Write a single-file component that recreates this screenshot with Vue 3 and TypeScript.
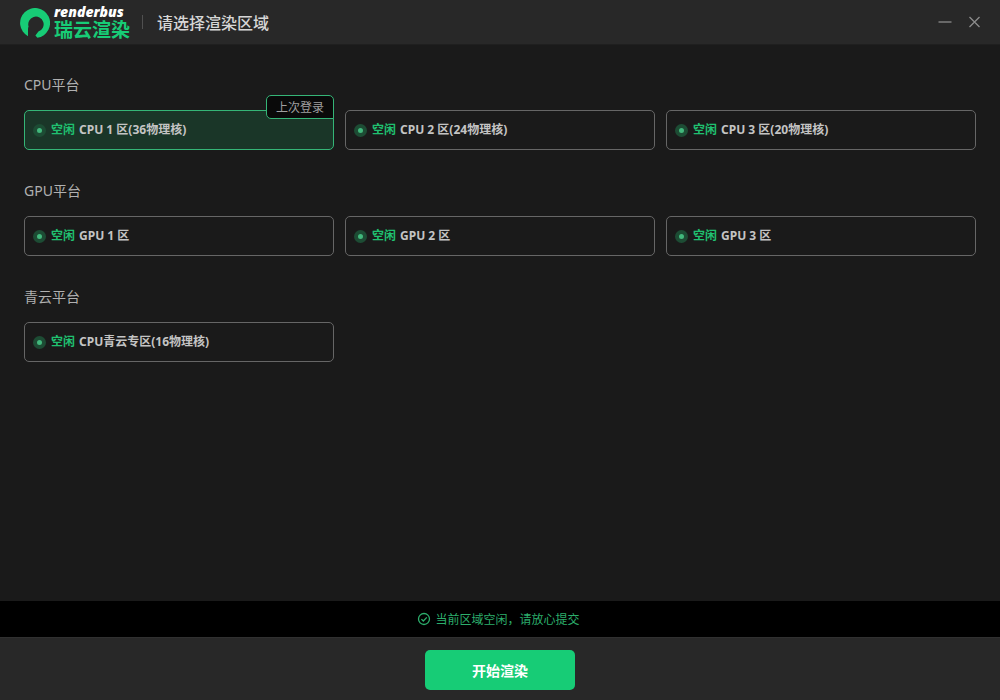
<script setup lang="ts">
import { ref } from 'vue'

interface Region {
  id: string
  name: string
}

interface Platform {
  title: string
  regions: Region[]
}

const platforms: Platform[] = [
  {
    title: 'CPU平台',
    regions: [
      { id: 'cpu1', name: 'CPU 1 区(36物理核)' },
      { id: 'cpu2', name: 'CPU 2 区(24物理核)' },
      { id: 'cpu3', name: 'CPU 3 区(20物理核)' },
    ],
  },
  {
    title: 'GPU平台',
    regions: [
      { id: 'gpu1', name: 'GPU 1 区' },
      { id: 'gpu2', name: 'GPU 2 区' },
      { id: 'gpu3', name: 'GPU 3 区' },
    ],
  },
  {
    title: '青云平台',
    regions: [{ id: 'qingyun', name: 'CPU青云专区(16物理核)' }],
  },
]

const lastLogin = 'cpu1'
const selected = ref<string>(lastLogin)
</script>

<template>
  <div class="window">
    <header class="titlebar">
      <div class="logo">
        <svg class="logo-mark" viewBox="0 0 30 30" aria-hidden="true">
          <path
            d="M8 28.2A15 15 0 1 1 17.4 29.8L15.4 27.6L18.4 23.6A7.7 7.7 0 1 0 8.6 18.6C8.1 19.8 8 20.6 8 22Z"
          />
        </svg>
        <div class="logo-words">
          <span class="logo-en">renderbus</span>
          <span class="logo-zh">瑞云渲染</span>
        </div>
      </div>
      <span class="divider"></span>
      <h1>请选择渲染区域</h1>
      <div class="controls">
        <button type="button" aria-label="Minimize">
          <svg viewBox="0 0 14 14"><path d="M0.5 7H13.5" /></svg>
        </button>
        <button type="button" aria-label="Close">
          <svg viewBox="0 0 14 14"><path d="M1.5 2L11.5 12M11.5 2L1.5 12" /></svg>
        </button>
      </div>
    </header>

    <main>
      <section v-for="platform in platforms" :key="platform.title">
        <h2>{{ platform.title }}</h2>
        <div class="grid">
          <button
            v-for="region in platform.regions"
            :key="region.id"
            type="button"
            class="card"
            :class="{ selected: selected === region.id }"
            :aria-pressed="selected === region.id"
            @click="selected = region.id"
          >
            <span class="dot"></span>
            <span class="state">空闲</span>
            <span class="name">{{ region.name }}</span>
            <span v-if="region.id === lastLogin" class="badge">上次登录</span>
          </button>
        </div>
      </section>
    </main>

    <div class="status" role="status">
      <svg viewBox="0 0 14 14" aria-hidden="true">
        <circle cx="7" cy="7" r="5.5" />
        <path d="M4.4 7.1L6.3 9L9.8 5.4" />
      </svg>
      <span>当前区域空闲，请放心提交</span>
    </div>

    <footer>
      <button type="button" class="start">开始渲染</button>
    </footer>
  </div>
</template>

<style>
body {
  margin: 0;
  background: #1a1a1a;
}
</style>

<style scoped>
.window {
  display: flex;
  flex-direction: column;
  min-height: 100vh;
  background: #1a1a1a;
  color: #c8c8c8;
  font-family: "Noto Sans", "Noto Sans CJK SC", sans-serif;
}

button {
  margin: 0;
  padding: 0;
  border: 0;
  background: none;
  color: inherit;
  font-family: inherit;
  cursor: pointer;
}

.titlebar {
  display: flex;
  align-items: center;
  box-sizing: border-box;
  height: 45px;
  padding: 0 18px 0 20px;
  background: #282828;
  border-bottom: 1px solid #1f1f1f;
}

.logo {
  display: flex;
  align-items: center;
  gap: 4px;
}

.logo-mark {
  width: 30px;
  height: 30px;
  margin-top: 2px;
  fill: #17cc76;
}

.logo-words {
  display: flex;
  flex-direction: column;
  width: 76px;
  white-space: nowrap;
}

.logo-en {
  color: #fff;
  font-family: "Open Sans", sans-serif;
  font-size: 14px;
  font-style: italic;
  font-weight: 800;
  line-height: 14px;
}

.logo-zh {
  color: #17cc76;
  font-family: "Noto Sans CJK SC", sans-serif;
  font-size: 19px;
  font-style: oblique 8deg;
  font-weight: 700;
  line-height: 20px;
}

.divider {
  width: 1px;
  height: 14px;
  margin: 0 14px 0 12px;
  background: #505050;
}

h1 {
  margin: 0;
  padding-top: 2px;
  color: #d6d6d6;
  font-size: 16px;
  font-weight: 500;
  line-height: 24px;
}

.controls {
  display: flex;
  gap: 16px;
  margin-left: auto;
}

.controls button,
.controls svg {
  display: block;
  width: 14px;
  height: 14px;
}

.controls path {
  fill: none;
  stroke: #8c8c8c;
  stroke-width: 1.3;
}

main {
  flex: 1;
  display: flex;
  flex-direction: column;
  gap: 30px;
  padding: 29px 24px;
}

section {
  display: flex;
  flex-direction: column;
  gap: 14px;
}

h2 {
  margin: 0;
  color: #b0b0b0;
  font-size: 14px;
  font-weight: 400;
  line-height: 22px;
}

.grid {
  display: grid;
  grid-template-columns: repeat(3, 1fr);
  gap: 11px;
}

.card {
  position: relative;
  display: flex;
  align-items: center;
  gap: 4px;
  height: 40px;
  padding: 0 8px;
  border: 1px solid #666;
  border-radius: 5px;
  font-size: 12px;
  font-weight: 700;
  line-height: 18px;
  white-space: nowrap;
}

.card.selected {
  border-color: #35b577;
  background: #1a3628;
}

.dot {
  box-sizing: border-box;
  width: 13px;
  height: 13px;
  margin-right: 1px;
  border: 4px solid #1d4c34;
  border-radius: 50%;
  background: #42b87c;
}

.state {
  color: #20c070;
}

.name {
  color: #c4c4c4;
}

.badge {
  position: absolute;
  top: -16px;
  right: -1px;
  box-sizing: border-box;
  height: 24px;
  padding: 0 9px;
  border: 1px solid #35b577;
  border-radius: 5px 5px 0 5px;
  background: #0a0a0a;
  color: #a0a0a0;
  font-weight: 400;
  line-height: 24px;
}

.status {
  display: flex;
  align-items: center;
  justify-content: center;
  gap: 4px;
  height: 36px;
  padding-right: 3px;
  background: #000;
  color: #2cae6c;
  font-size: 12px;
  line-height: 18px;
}

.status span {
  padding-top: 2px;
}

.status svg {
  width: 14px;
  height: 14px;
  fill: none;
  stroke: #2cae6c;
  stroke-width: 1.3;
}

footer {
  display: flex;
  justify-content: center;
  padding: 12px 24px 10px;
  border-top: 1px solid #303030;
  background: #282828;
}

.start {
  width: 150px;
  height: 40px;
  padding-top: 2px;
  border-radius: 5px;
  background: #17cc76;
  color: #fff;
  font-size: 14px;
  font-weight: 700;
  line-height: 20px;
}
</style>
